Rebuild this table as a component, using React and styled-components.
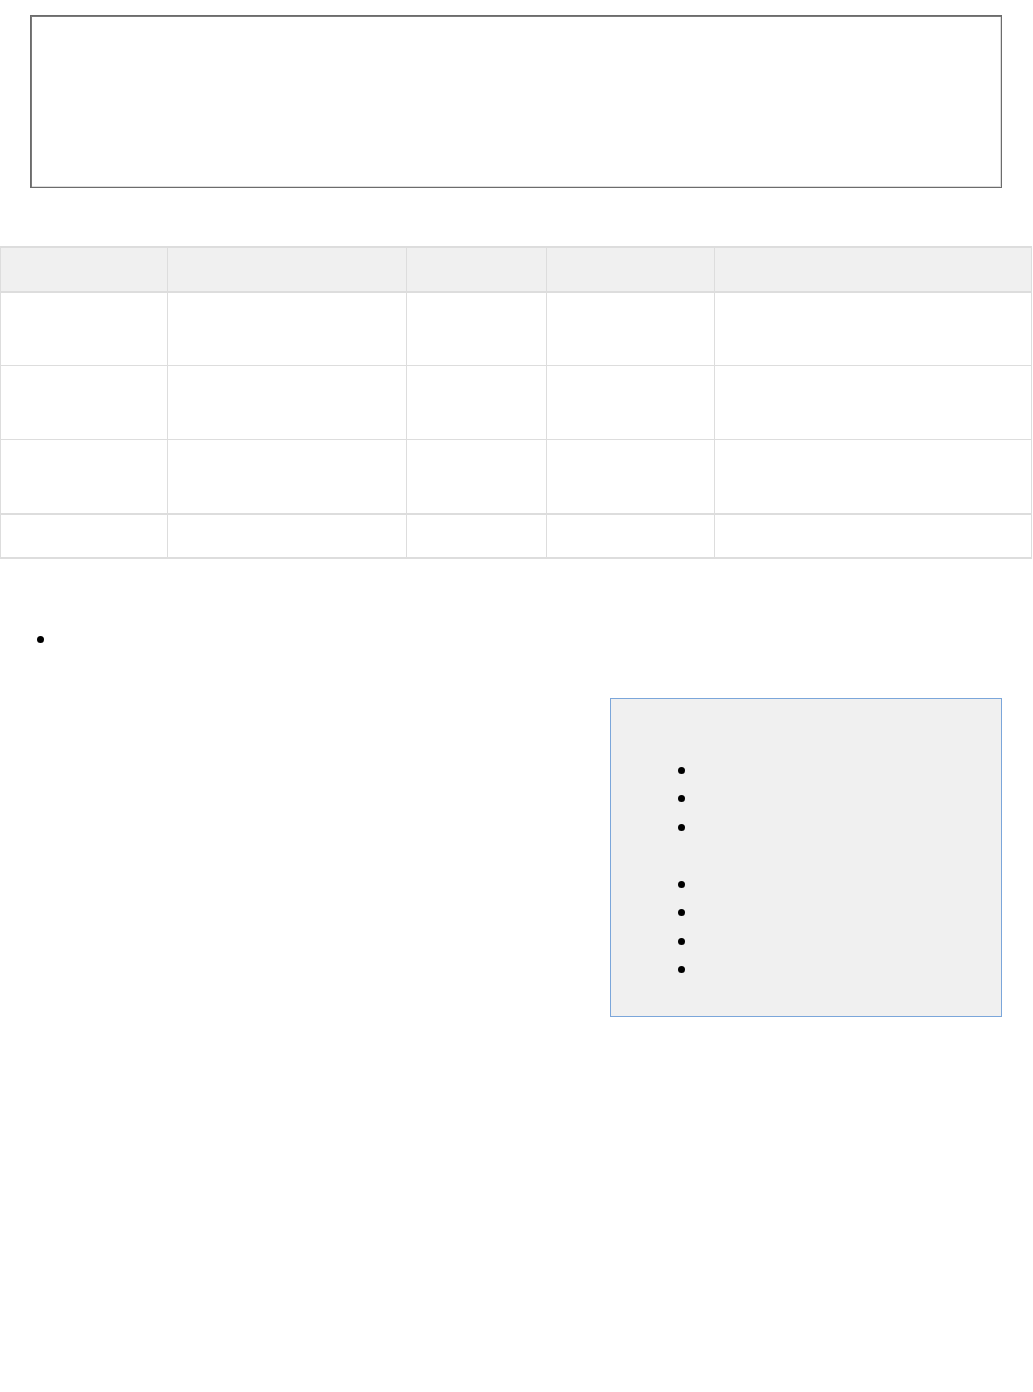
import React from 'react';
import styled, { createGlobalStyle } from 'styled-components';

const GlobalStyle = createGlobalStyle`
  body {
    margin: 0;
    background: #ffffff;
    font-family: "Liberation Sans", Arial, sans-serif;
    font-size: 14px;
    color: #333333;
  }
`;

const Page = styled.div`
  display: flex;
  flex-direction: column;
  width: 1033px;
  min-height: 1392px;
`;

const CodeBox = styled.div`
  box-sizing: border-box;
  height: 173px;
  margin: 15px 31px 0 30px;
  border: 1px solid #6c6c6c;
  box-shadow: inset 1px 1px 0 #7a7a7a, inset -1px -1px 0 #dcdcdc;
  background: #ffffff;
`;

const Table = styled.table`
  width: 1031px;
  margin-top: 58px;
  border-collapse: collapse;
  table-layout: fixed;
  border-top: 2px solid #dddddd;
  border-bottom: 2px solid #dddddd;
`;

const HeadCell = styled.th`
  height: 43px;
  padding: 0;
  background: #f0f0f0;
  border: 1px solid #dddddd;
  border-bottom: 2px solid #dddddd;
`;

const Cell = styled.td`
  height: ${(p) => p.$h}px;
  padding: 0;
  border: 1px solid #dddddd;
  border-top: ${(p) => (p.$foot ? '2px' : '1px')} solid #dddddd;
`;

const List = styled.ul`
  list-style: none;
  margin: ${(p) => p.$top || 0}px 0 0;
  padding: 0 0 0 ${(p) => p.$indent}px;
`;

const Item = styled.li`
  position: relative;
  height: ${(p) => p.$h}px;
  &::before {
    content: '';
    position: absolute;
    left: 0;
    top: 50%;
    width: 7px;
    height: 7px;
    margin-top: -3.5px;
    border-radius: 50%;
    background: #000000;
  }
`;

const Aside = styled.div`
  box-sizing: border-box;
  align-self: flex-end;
  width: 392px;
  height: 319px;
  margin: 49px 31px 0 0;
  padding: 14px 0 0;
  border: 1px solid #7ba6da;
  background: #f0f0f0;
`;

const AsideTitle = styled.div`
  height: 28px;
  margin-bottom: 15px;
`;

const Gap = styled.div`
  height: 28.5px;
`;

const widths = [167, 239, 140, 168, 317];
const rows = [73, 74, 74];

export default function App() {
  return (
    <Page>
      <GlobalStyle />
      <CodeBox />
      <Table>
        <colgroup>
          {widths.map((w, i) => (
            <col key={i} style={{ width: w }} />
          ))}
        </colgroup>
        <thead>
          <tr>
            {widths.map((_, i) => (
              <HeadCell key={i} />
            ))}
          </tr>
        </thead>
        <tbody>
          {rows.map((h, r) => (
            <tr key={r}>
              {widths.map((_, i) => (
                <Cell key={i} $h={h - 1} />
              ))}
            </tr>
          ))}
        </tbody>
        <tfoot>
          <tr>
            {widths.map((_, i) => (
              <Cell key={i} $h={42} $foot />
            ))}
          </tr>
        </tfoot>
      </Table>
      <List $top={70} $indent={37}>
        <Item $h={20} />
      </List>
      <Aside>
        <AsideTitle />
        <List $indent={67}>
          <Item $h={28.5} />
          <Item $h={28.5} />
          <Item $h={28.5} />
        </List>
        <Gap />
        <List $indent={67}>
          <Item $h={28.5} />
          <Item $h={28.5} />
          <Item $h={28.5} />
          <Item $h={28.5} />
        </List>
      </Aside>
    </Page>
  );
}
